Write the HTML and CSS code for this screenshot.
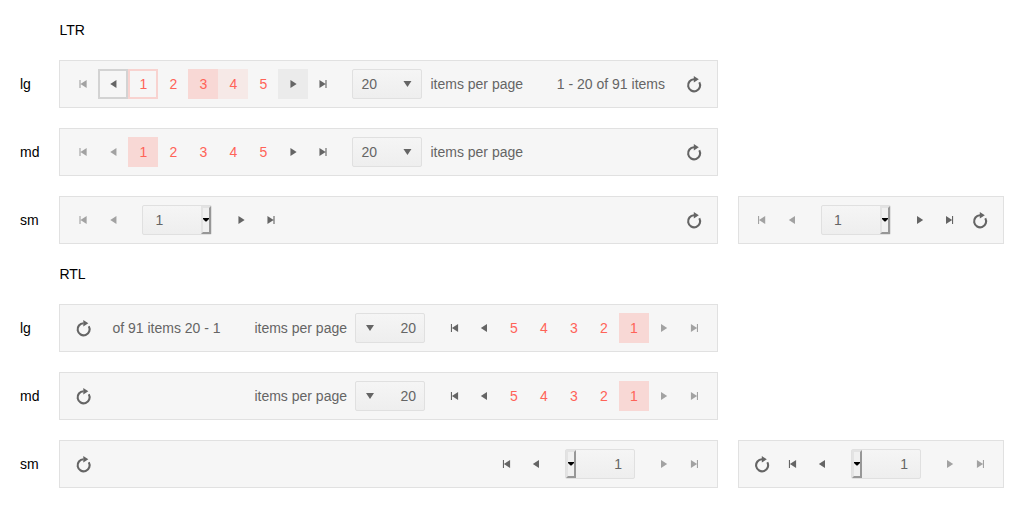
FILE: index.html
```
<!DOCTYPE html>
<html lang="en">
<head>
<meta charset="utf-8">
<title>Pager</title>
<link rel="stylesheet" href="styles.css">
</head>
<body>
<svg class="defs" aria-hidden="true">
  <symbol id="i-prev" viewBox="0 0 16 16"><path d="M11 4v8L4.800 8z"/></symbol>
  <symbol id="i-next" viewBox="0 0 16 16"><path d="M5 4v8l6.200-4z"/></symbol>
  <symbol id="i-first" viewBox="0 0 16 16"><path d="M4 4h1.100v8H4zM11.200 4v8L5 8z"/></symbol>
  <symbol id="i-last" viewBox="0 0 16 16"><path d="M11.100 4H10v8h1.100zM4 4v8l6.200-4z"/></symbol>
  <symbol id="i-down" viewBox="0 0 16 16"><path d="M4 5h8l-4 6z"/></symbol>
  <symbol id="i-caret" viewBox="0 0 6 4"><path d="M0 0h6v1L3.500 3.500h-1L0 1z"/></symbol>
  <symbol id="i-refresh" viewBox="0 0 18 18"><path d="M9 3.700A6 6 0 1 0 14.300 6.700" fill="none" stroke="currentColor" stroke-width="2.100"/><path d="M8.800.400 13.800 3.700 8.800 7z"/></symbol>
</svg>
<main class="grid">
  <h2 class="title">LTR</h2>

  <span class="label">lg</span>
  <div class="pager main">
    <a class="btn off"><svg><use href="#i-first"/></svg></a>
    <a class="btn focus"><svg><use href="#i-prev"/></svg></a>
    <a class="btn num focus">1</a><a class="btn num">2</a><a class="btn num selected">3</a><a class="btn num hover">4</a><a class="btn num">5</a>
    <a class="btn hover"><svg><use href="#i-next"/></svg></a>
    <a class="btn"><svg><use href="#i-last"/></svg></a>
    <span class="select"><span>20</span><svg><use href="#i-down"/></svg></span>
    <span class="sizes">items per page</span>
    <span class="info">1 - 20 of 91 items</span>
    <a class="btn refresh"><svg><use href="#i-refresh"/></svg></a>
  </div>

  <span class="label">md</span>
  <div class="pager main">
    <a class="btn off"><svg><use href="#i-first"/></svg></a>
    <a class="btn off"><svg><use href="#i-prev"/></svg></a>
    <a class="btn num selected">1</a><a class="btn num">2</a><a class="btn num">3</a><a class="btn num">4</a><a class="btn num">5</a>
    <a class="btn"><svg><use href="#i-next"/></svg></a>
    <a class="btn"><svg><use href="#i-last"/></svg></a>
    <span class="select"><span>20</span><svg><use href="#i-down"/></svg></span>
    <span class="sizes">items per page</span>
    <a class="btn refresh"><svg><use href="#i-refresh"/></svg></a>
  </div>

  <span class="label">sm</span>
  <div class="pager main">
    <a class="btn off"><svg><use href="#i-first"/></svg></a>
    <a class="btn off"><svg><use href="#i-prev"/></svg></a>
    <span class="select native"><span>1</span><span class="drop"><svg><use href="#i-caret"/></svg></span></span>
    <a class="btn"><svg><use href="#i-next"/></svg></a>
    <a class="btn"><svg><use href="#i-last"/></svg></a>
    <a class="btn refresh"><svg><use href="#i-refresh"/></svg></a>
  </div>
  <div class="pager">
    <a class="btn off"><svg><use href="#i-first"/></svg></a>
    <a class="btn off"><svg><use href="#i-prev"/></svg></a>
    <span class="select native"><span>1</span><span class="drop"><svg><use href="#i-caret"/></svg></span></span>
    <a class="btn"><svg><use href="#i-next"/></svg></a>
    <a class="btn"><svg><use href="#i-last"/></svg></a>
    <a class="btn refresh"><svg><use href="#i-refresh"/></svg></a>
  </div>

  <h2 class="title">RTL</h2>

  <span class="label">lg</span>
  <div class="pager main" dir="rtl">
    <a class="btn off edge"><svg><use href="#i-last"/></svg></a>
    <a class="btn off"><svg><use href="#i-next"/></svg></a>
    <a class="btn num selected">1</a><a class="btn num">2</a><a class="btn num">3</a><a class="btn num">4</a><a class="btn num">5</a>
    <a class="btn"><svg><use href="#i-prev"/></svg></a>
    <a class="btn edge"><svg><use href="#i-first"/></svg></a>
    <span class="select"><span>20</span><svg><use href="#i-down"/></svg></span>
    <span class="sizes">items per page</span>
    <span class="info">1 - 20 of 91 items</span>
    <a class="btn refresh"><svg><use href="#i-refresh"/></svg></a>
  </div>

  <span class="label">md</span>
  <div class="pager main" dir="rtl">
    <a class="btn off edge"><svg><use href="#i-last"/></svg></a>
    <a class="btn off"><svg><use href="#i-next"/></svg></a>
    <a class="btn num selected">1</a><a class="btn num">2</a><a class="btn num">3</a><a class="btn num">4</a><a class="btn num">5</a>
    <a class="btn"><svg><use href="#i-prev"/></svg></a>
    <a class="btn edge"><svg><use href="#i-first"/></svg></a>
    <span class="select"><span>20</span><svg><use href="#i-down"/></svg></span>
    <span class="sizes">items per page</span>
    <a class="btn refresh"><svg><use href="#i-refresh"/></svg></a>
  </div>

  <span class="label">sm</span>
  <div class="pager main" dir="rtl">
    <a class="btn off edge"><svg><use href="#i-last"/></svg></a>
    <a class="btn off"><svg><use href="#i-next"/></svg></a>
    <span class="select native"><span>1</span><span class="drop"><svg><use href="#i-caret"/></svg></span></span>
    <a class="btn"><svg><use href="#i-prev"/></svg></a>
    <a class="btn edge"><svg><use href="#i-first"/></svg></a>
    <a class="btn refresh"><svg><use href="#i-refresh"/></svg></a>
  </div>
  <div class="pager" dir="rtl">
    <a class="btn off edge"><svg><use href="#i-last"/></svg></a>
    <a class="btn off"><svg><use href="#i-next"/></svg></a>
    <span class="select native"><span>1</span><span class="drop"><svg><use href="#i-caret"/></svg></span></span>
    <a class="btn"><svg><use href="#i-prev"/></svg></a>
    <a class="btn edge"><svg><use href="#i-first"/></svg></a>
    <a class="btn refresh"><svg><use href="#i-refresh"/></svg></a>
  </div>
</main>
</body>
</html>
```
FILE: styles.css
```
* { box-sizing: border-box; }

body {
  margin: 0;
  padding: 20px;
  background: #fff;
  color: #000;
  font: 14px/20px "Liberation Sans", Arial, sans-serif;
}

.defs { display: none; }

.grid {
  display: grid;
  grid-template-columns: auto 1fr auto;
  gap: 20px;
  align-items: center;
}

.title {
  grid-column: 2 / 4;
  margin: 0;
  font-size: 14px;
  font-weight: 400;
}

.label { grid-column: 1; }

.pager {
  display: flex;
  align-items: center;
  height: 48px;
  padding: 8px;
  border: 1px solid #e1e1e1;
  background: #f6f6f6;
  color: #656565;
}

.btn {
  display: flex;
  flex: none;
  align-items: center;
  justify-content: center;
  width: 30px;
  height: 30px;
}

.btn svg {
  width: 16px;
  height: 16px;
  fill: currentColor;
  overflow: visible;
}

.off { color: #a2a2a2; }
.hover { background: #ebebeb; }
.focus { box-shadow: inset 0 0 0 2px #d3d3d3; }

.num { color: #ff6358; }
.num.hover { background: #f6e9e7; }
.num.selected { background: #f8d8d5; }
.num.focus { box-shadow: inset 0 0 0 2px #f8d3d0; }

.refresh { margin-inline-start: auto; }
.refresh svg { width: 18px; height: 18px; }

/* sub-pixel optical alignment of the glyphs */
.main use { transform: translateX(.45px); }
[dir="rtl"] use { transform: none; }
[dir="rtl"] .edge use { transform: translateX(.9px); }
.pager .refresh use { transform: translateY(.6px); }
.main[dir="rtl"] .refresh use { transform: translate(.5px, .6px); }
.pager .native use { transform: none; }

.select {
  display: flex;
  flex: none;
  align-items: center;
  justify-content: space-between;
  width: 70px;
  height: 30px;
  margin-inline-start: 14px;
  padding: 0 6px 0 8px;
  border: 1px solid #e0e0e0;
  border-radius: 2px;
  background: linear-gradient(#f5f5f5, #eee);
}

[dir="rtl"] .select { padding: 0 8px 0 6px; }

.select svg {
  width: 16px;
  height: 16px;
  fill: currentColor;
}

.select.native,
[dir="rtl"] .select.native {
  margin-inline-end: 14px;
  padding: 0;
  padding-inline-start: 12px;
}

.drop {
  display: flex;
  align-items: center;
  justify-content: center;
  width: 10px;
  height: 28px;
  border: 2px solid;
  border-color: #e3e3e3 #979797 #979797 #e3e3e3;
  background: #f0f0f0;
  color: #000;
}

.select .drop svg {
  width: 6px;
  height: 4px;
}

.sizes { margin-inline-start: 8px; }
.info { margin-inline-start: auto; }
.info + .refresh { margin-inline-start: 14px; }
```
